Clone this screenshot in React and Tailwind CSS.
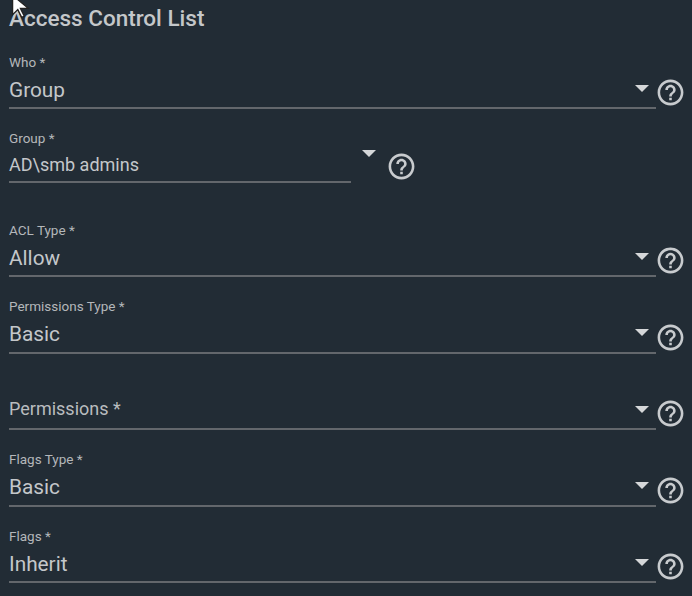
function HelpIcon() {
  return (
    <svg viewBox="0 0 24 24" className="h-[31px] w-[31px] shrink-0 fill-[#c8cbce]">
      <path d="M11 18h2v-2h-2v2zm1-16C6.48 2 2 6.48 2 12s4.48 10 10 10 10-4.48 10-10S17.52 2 12 2zm0 18c-4.41 0-8-3.59-8-8s3.59-8 8-8 8 3.59 8 8-3.59 8-8 8zm0-14c-2.21 0-4 1.79-4 4h2c0-1.1.9-2 2-2s2 .9 2 2c0 2-3 1.75-3 5h2c0-2.25 3-2.5 3-5 0-2.21-1.79-4-4-4z" />
    </svg>
  );
}

function Caret({ className = '' }) {
  return <div className={`h-0 w-0 border-x-[7px] border-t-[7px] border-x-transparent border-t-[#d5d7d9] ${className}`} />;
}

function SelectField({ label, value, placeholder, tall, className = '' }) {
  return (
    <div className={`flex items-end ${className}`}>
      <div className="w-[647px]">
        <div className="h-[15px] text-[13.5px] leading-[15px] text-[#b4b7ba]">{label}</div>
        <div className={`flex items-center justify-between border-b-2 border-[#63676c] ${tall ? 'h-[40px] pt-[4px]' : 'h-[39px] pt-[5px]'}`}>
          <span className={placeholder ? 'mb-[8px] text-[18px] text-[#b9bcbf]' : 'text-[20.8px] text-[#c4c7ca]'}>
            {placeholder || value}
          </span>
          <Caret className="mr-[7px] mb-[5px]" />
        </div>
      </div>
      <div className="mb-[1px] ml-[-1px]">
        <HelpIcon />
      </div>
    </div>
  );
}

export default function App() {
  return (
    <div className="relative h-[596px] w-[692px] overflow-hidden bg-[#222c35] pl-[9px] font-['Roboto',sans-serif]">
      <svg viewBox="0 0 20 20" className="absolute left-[10px] top-[-6px] h-[26px] w-[26px]">
        <path d="M2 1v15l4-4 3 6 2-1-3-6h6z" fill="#fff" stroke="#222" strokeWidth="1" />
      </svg>
      <h1 className="h-[55px] pt-[5px] text-[22.5px] font-medium leading-[27px] text-[#c4c7ca]">Access Control List</h1>

      <SelectField label="Who *" value="Group" />

      <div className="mt-[22px] flex items-start">
        <div className="w-[342px]">
          <div className="h-[15px] text-[13.5px] leading-[15px] text-[#b4b7ba]">Group *</div>
          <div className="flex h-[37px] items-center border-b-2 border-[#63676c] pt-[2px] text-[18px] text-[#c4c7ca]">AD\smb admins</div>
        </div>
        <Caret className="ml-[11px] mt-[19px]" />
        <div className="ml-[10px] mt-[20px]">
          <HelpIcon />
        </div>
      </div>

      <SelectField label="ACL Type *" value="Allow" className="mt-[40px]" />
      <SelectField label="Permissions Type *" value="Basic" tall className="mt-[22px]" />
      <SelectField label="" placeholder="Permissions *" className="mt-[22px]" />
      <SelectField label="Flags Type *" value="Basic" tall className="mt-[22px]" />
      <SelectField label="Flags *" value="Inherit" className="mt-[22px]" />
    </div>
  );
}
